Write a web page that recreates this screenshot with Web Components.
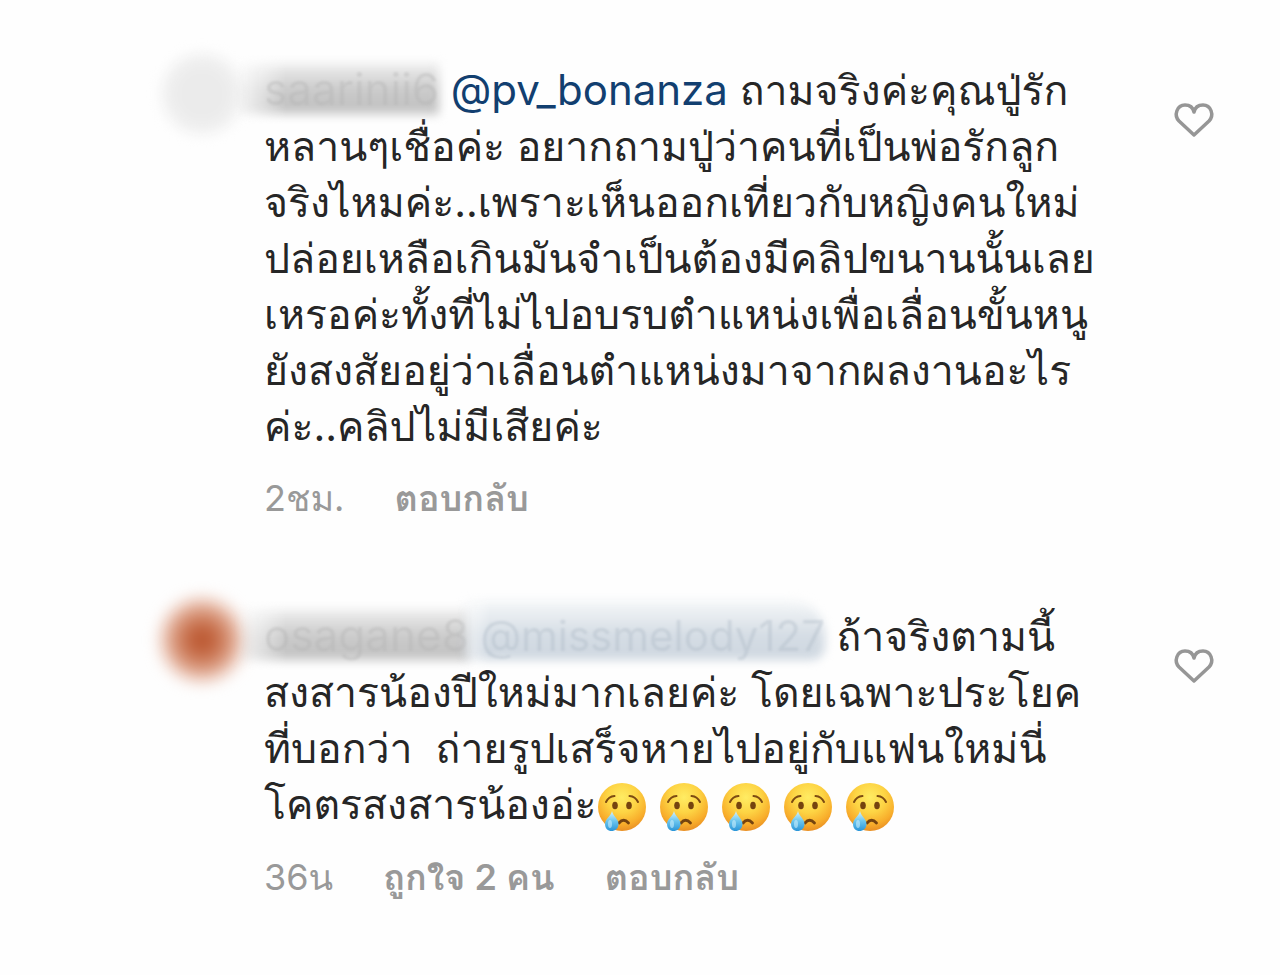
<!DOCTYPE html>
<html lang="th">
<head>
<meta charset="utf-8">
<meta name="viewport" content="width=device-width, initial-scale=1">
<title>ความคิดเห็น</title>
<style>
    body {
        margin: 0;
        background: #fefefe;
        color: #262626;
        font-family: Inter, Loma, "Noto Sans Thai Looped", Waree, Garuda, "Liberation Sans", sans-serif;
    }
</style>
</head>
<body>
<comment-list>
    <user-comment time="2ชม.">
        <user-avatar slot="avatar"></user-avatar>
        <hidden-name>saarinii6</hidden-name> <user-mention>@pv_bonanza</user-mention> ถามจริงค่ะคุณปู่รัก<br>
        หลานๆเชื่อค่ะ อยากถามปู่ว่าคนที่เป็นพ่อรักลูก<br>
        จริงไหมค่ะ..เพราะเห็นออกเที่ยวกับหญิงคนใหม่<br>
        ปล่อยเหลือเกินมันจำเป็นต้องมีคลิปขนานนั้นเลย<br>
        เหรอค่ะทั้งที่ไม่ไปอบรบตำแหน่งเพื่อเลื่อนขั้นหนู<br>
        ยังสงสัยอยู่ว่าเลื่อนตำแหน่งมาจากผลงานอะไร<br>
        ค่ะ..คลิปไม่มีเสียค่ะ
    </user-comment>
    <user-comment time="36น" likes="ถูกใจ 2 คน">
        <user-avatar slot="avatar" tone="warm"></user-avatar>
        <hidden-name>osagane8</hidden-name> <hidden-name tone="link">@missmelody127</hidden-name> ถ้าจริงตามนี้<br>
        สงสารน้องปีใหม่มากเลยค่ะ โดยเฉพาะประโยค<br>
        ที่บอกว่า&nbsp; ถ่ายรูปเสร็จหายไปอยู่กับแฟนใหม่นี่<br>
        โคตรสงสารน้องอ่ะ<crying-face></crying-face><crying-face></crying-face><crying-face></crying-face><crying-face></crying-face><crying-face></crying-face>
    </user-comment>
</comment-list>

<script>
class CommentList extends HTMLElement {
    constructor() {
        super();
        this.attachShadow({ mode: 'open' });
        this.shadowRoot.innerHTML = `
            <slot></slot>
            <style>
                :host {
                    display: flex;
                    flex-direction: column;
                    gap: 88px;
                    padding: 62px 64px 48px 160px;
                }
            </style>
        `;
    }
}

class UserComment extends HTMLElement {
    constructor() {
        super();
        this.attachShadow({ mode: 'open' });
        this.render();
    }
    render() {
        this.shadowRoot.innerHTML = this.getTemplate();
    }
    getTemplate() {
        return `
            <slot name="avatar"></slot>
            <div class="body">
                <div class="text"><slot></slot></div>
                <div class="meta">
                    <span>${this.getAttribute('time')}</span>
                    ${this.getLikes()}
                    <button type="button">ตอบกลับ</button>
                </div>
            </div>
            <like-button></like-button>
            ${this.getStyles()}
        `;
    }
    getLikes() {
        const likes = this.getAttribute('likes');
        return likes ? `<button type="button">${likes}</button>` : '';
    }
    getStyles() {
        return `
            <style>
                :host {
                    display: grid;
                    grid-template-columns: 84px minmax(0, 1fr) 44px;
                    column-gap: 20px;
                    align-items: start;
                }
                .text {
                    font-size: 41px;
                    line-height: 56px;
                    white-space: nowrap;
                }
                .meta {
                    display: flex;
                    gap: 50px;
                    margin-top: 22px;
                    color: #999;
                    font-size: 36px;
                    line-height: 44px;
                }
                button {
                    padding: 0;
                    border: 0;
                    background: none;
                    color: inherit;
                    font: inherit;
                    font-weight: 600;
                    cursor: pointer;
                }
            </style>
        `;
    }
}

class UserAvatar extends HTMLElement {
    constructor() {
        super();
        this.attachShadow({ mode: 'open' });
        this.shadowRoot.innerHTML = `
            <style>
                :host {
                    display: block;
                    height: 56px;
                }
                :host::before {
                    content: "";
                    display: block;
                    width: 84px;
                    height: 84px;
                    margin-top: -10px;
                    border-radius: 50%;
                    background: radial-gradient(circle, #ebebeb 40%, #f4f4f4 70%);
                    filter: blur(6px);
                }
                :host([tone="warm"])::before {
                    background: radial-gradient(circle, #b9532c 8%, #cd7c5a 35%, #edc9ba 68%);
                    filter: blur(8px);
                }
            </style>
        `;
    }
}

class HiddenName extends HTMLElement {
    constructor() {
        super();
        this.attachShadow({ mode: 'open' });
        this.shadowRoot.innerHTML = `
            <span><slot></slot></span>
            <style>
                :host {
                    display: inline-block;
                    position: relative;
                    color: #b4b4b4;
                    font-size: 44px;
                    line-height: 44px;
                }
                /* the transparent border leaves room for the blur inside the mask */
                :host::before {
                    content: "";
                    position: absolute;
                    inset: -20px -16px -20px -42px;
                    border: 16px solid transparent;
                    background: linear-gradient(#f0f0f0, #cbcbcb 50%, #c2c2c2 85%, #d4d4d4) padding-box;
                    filter: blur(5px);
                    mask-image: linear-gradient(90deg, transparent 10px, #000 64px);
                    mask-origin: border-box;
                }
                span {
                    position: relative;
                    filter: blur(1px);
                    opacity: .4;
                }
                :host([tone="link"]) {
                    color: #aebac6;
                    font-size: 42px;
                }
                :host([tone="link"])::before {
                    inset: -30px -16px -18px -36px;
                    border-radius: 0 50px 30px 0;
                    background: linear-gradient(#f6f8f9, #d4dce4 60%, #ced7e0) padding-box;
                    mask-image: linear-gradient(90deg, transparent 10px, #000 46px);
                }
            </style>
        `;
    }
}

class UserMention extends HTMLElement {
    constructor() {
        super();
        this.attachShadow({ mode: 'open' });
        this.shadowRoot.innerHTML = `
            <a href="#"><slot></slot></a>
            <style>
                :host {
                    display: inline;
                    font-size: 42px;
                    line-height: 44px;
                }
                a {
                    color: #123f70;
                    text-decoration: none;
                }
            </style>
        `;
    }
}

class LikeButton extends HTMLElement {
    constructor() {
        super();
        this.attachShadow({ mode: 'open' });
        this.shadowRoot.innerHTML = `
            <button type="button" aria-label="ถูกใจ">
                <svg viewBox="0 0 44 44" width="44" height="44" aria-hidden="true">
                    <path d="M22 37 L7 23 C1.500 17 5 7 13 7 C17.500 7 21 9.500 22 14 C23 9.500 26.500 7 31 7 C39 7 42.500 17 37 23 Z" fill="none" stroke="#969696" stroke-width="3.500" stroke-linejoin="round"/>
                </svg>
            </button>
            <style>
                :host {
                    display: block;
                    padding-top: 36px;
                }
                button {
                    display: block;
                    padding: 0;
                    border: 0;
                    background: none;
                    cursor: pointer;
                }
                svg {
                    display: block;
                }
            </style>
        `;
    }
}

class CryingFace extends HTMLElement {
    constructor() {
        super();
        this.attachShadow({ mode: 'open' });
        this.shadowRoot.innerHTML = `
            <svg viewBox="0 0 50 50" width="50" height="50" role="img" aria-label="ร้องไห้">
                <defs>
                    <radialGradient id="face" cx="50%" cy="30%" r="70%">
                        <stop offset="0" stop-color="#ffec63"/>
                        <stop offset=".45" stop-color="#fdd444"/>
                        <stop offset=".8" stop-color="#f8ad2b"/>
                        <stop offset="1" stop-color="#e98f24"/>
                    </radialGradient>
                    <linearGradient id="tear" x1="0" y1="0" x2="0" y2="1">
                        <stop offset="0" stop-color="#d9f3fc"/>
                        <stop offset=".5" stop-color="#6cc6ee"/>
                        <stop offset="1" stop-color="#2a95d8"/>
                    </linearGradient>
                </defs>
                <circle cx="25" cy="24" r="24" fill="url(#face)"/>
                <ellipse cx="18" cy="22.500" rx="2.800" ry="3.800" fill="#75430f"/>
                <ellipse cx="32" cy="22.500" rx="2.800" ry="3.800" fill="#75430f"/>
                <path d="M9 19 Q11.500 13.500 17.500 13 M32.500 13 Q38.500 13.500 41 19" fill="none" stroke="#7d4b12" stroke-width="2" stroke-linecap="round"/>
                <path d="M22 40 Q26.500 34.500 31.500 40" fill="none" stroke="#75430f" stroke-width="2.800" stroke-linecap="round"/>
                <path d="M15 28 C16 33 21.500 36 21.500 41 C21.500 45.500 18 48 14.500 48 C11 48 8 45.500 8 41 C8 36 14 33 15 28 Z" fill="url(#tear)"/>
                <ellipse cx="13" cy="41" rx="2" ry="4" fill="#c9eefb" opacity=".6"/>
            </svg>
            <style>
                :host {
                    display: inline-block;
                    width: 50px;
                    margin-right: 12px;
                    line-height: 0;
                    vertical-align: middle;
                }
                svg {
                    display: block;
                }
            </style>
        `;
    }
}

customElements.define('comment-list', CommentList);
customElements.define('like-button', LikeButton);
customElements.define('user-avatar', UserAvatar);
customElements.define('hidden-name', HiddenName);
customElements.define('user-mention', UserMention);
customElements.define('crying-face', CryingFace);
customElements.define('user-comment', UserComment);
</script>
</body>
</html>
